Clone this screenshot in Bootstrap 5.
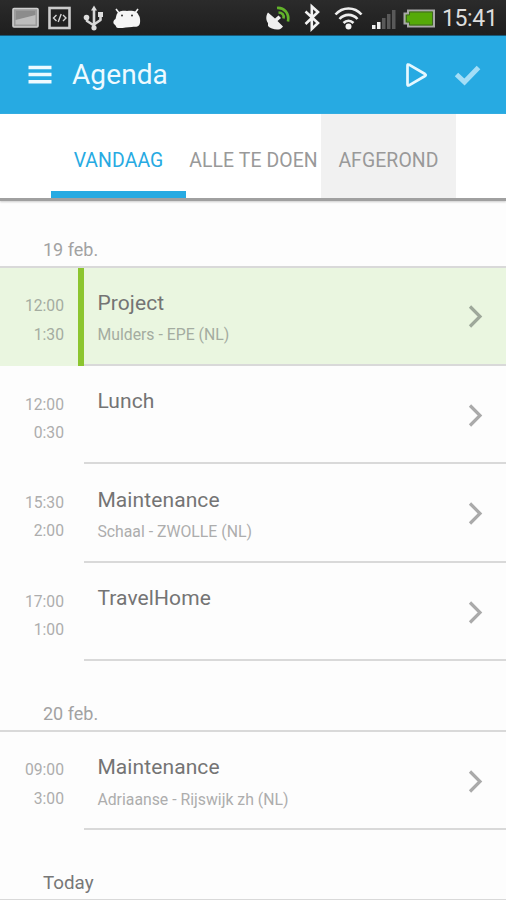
<!DOCTYPE html>
<html lang="nl">
<head>
<meta charset="utf-8">
<meta name="viewport" content="width=device-width, initial-scale=1">
<title>Agenda</title>
<link href="https://cdn.jsdelivr.net/npm/bootstrap@5.3.0/dist/css/bootstrap.min.css" rel="stylesheet">
<style>
body{font-family:Roboto,"Liberation Sans",sans-serif;height:900px;overflow:hidden;background:#fdfdfd;color:#777}
svg{display:block;flex:none}
.statusbar{height:36px;background:linear-gradient(#2b2b2b,#1e1e1e);border-bottom:1px solid #16597a;padding:0 8.500px 0 12px}
.clock{font-size:23px;line-height:36px;color:#ddd;letter-spacing:-.35px;padding-top:2px;margin-left:3.500px}
.appbar{height:78px;background:#27aae2;padding:0 25px 0 28px}
.appbar h1{font-size:28px;line-height:36px;color:#eefaff;font-weight:400;margin-left:20px;letter-spacing:.1px}
.done{margin-left:26px}
.tabs{height:87px;background:#fff;border-bottom:3px solid #a0a0a0;box-shadow:0 1px 2px #ccc;padding-left:51px}
.tabs .nav-link{width:135px;padding:0;border-radius:0;font-size:19.4px;line-height:93px;height:84px;color:#999;text-align:center;white-space:nowrap;letter-spacing:.1px}
.tabs .nav-link.active{color:#27aae2;box-shadow:inset 0 -7px #27aae2}
.tabs .nav-link.pressed{background:#f1f1f1}
.day{height:70.5px;border-bottom:2px solid #d9d9d9;padding:0 0 2.500px 43px;font-size:18px;line-height:26px;color:#a2a2a2}
.day.first{height:66.7px}
.day.today{color:#777;font-size:18.800px}
.event{height:98.4px}
.times{width:78px;padding:24.700px 14px 0 0;font-size:15.7px;line-height:28.2px;color:#adadad}
.stripe{width:5.5px}
.info{border-bottom:2px solid #d9d9d9;padding:20.3px 23px 0 13.900px}
.title{font-size:21px;line-height:31.5px;letter-spacing:.1px;color:#747474}
.place{font-size:15.8px;line-height:31px;color:#adadad}
.current{background:#eaf6e0}
.current .stripe{background:#8cc52f}
.current .times,.current .place{color:#a4aca0}
.chev{margin-top:15.5px}
</style>
</head>
<body>
<div class="statusbar d-flex align-items-center justify-content-between">
  <div class="d-flex align-items-center">
    <svg width="130" height="35" viewBox="12 0 130 35">
      <rect x="13" y="8.5" width="25" height="18.5" rx="1" fill="#9b9b9b" stroke="#d0d0d0" stroke-width="1.6"/>
      <rect x="15.5" y="11" width="20" height="13.5" fill="#bdbdbd"/><path d="M15.500 11h20v4l-20 5z" fill="#8c8c8c"/>
      <rect x="49.500" y="8" width="20" height="20" fill="#222" stroke="#ccc" stroke-width="2.600"/>
      <path d="M56.500 15l-3 3 3 3M63 15l3 3-3 3M61.200 14l-3 8" fill="none" stroke="#d5d5d5" stroke-width="1.400"/>
      <g fill="none" stroke="#d8d8d8" stroke-width="2.600" stroke-linejoin="round"><path d="M94 28V9M94 25.500l-7-4.500v-4M94 24.500l6.500-4.500V14"/></g>
      <g fill="#ddd"><path d="M91 10.500l3-5 3 5z"/><circle cx="86.500" cy="17.500" r="2.800"/><rect x="98" y="12" width="5" height="5"/><circle cx="94" cy="27.800" r="2.600"/></g>
      <path d="M119 13L116 9M135 13L138 9" stroke="#f3f3f3" stroke-width="1.600"/>
      <path d="M116.500 15C118 11 122 10.500 127 11C133 10.500 137 11 138.500 15C140.500 17 140.500 23 139.500 24.500C138 27.500 135 26.500 132 27C127 27 122 28.500 118 28C115.500 27.500 116.500 25.500 114.500 24.500C112.500 23 113.500 20 115.500 19Z" fill="#f5f5f5"/>
      <circle cx="122" cy="15.500" r="1" fill="#333"/><circle cx="132" cy="15.500" r="1" fill="#333"/>
    </svg>
  </div>
  <div class="d-flex align-items-center">
    <svg width="176" height="35" viewBox="262 0 176 35">
      <path d="M268 12.500c-2.500 3.500-2 8 0 10.500v3c2 2.500 7 4 10.500 3.500 1.800-.2 3.500-1.500 4.500-3l-5.500-5.500 3.500-3-2.500-2.500-3.500 3z" fill="#eee"/>
      <path d="M278.500 12.500c3.500 0 6 2.500 5 6M277 8c7-.5 12.500 5 11 13.500" fill="none" stroke="#62b32a" stroke-width="2.700"/>
      <path d="M305.500 11.500L318 23l-6.200 6V6.500L318 12l-12.500 12" fill="none" stroke="#f2f2f2" stroke-width="2.600"/>
      <g fill="none" stroke="#eee" stroke-width="2.600"><path d="M335.500 14.500c7-8 19-8 26 0M339.500 19c5-5.500 13-5.500 18 0M343.500 23c3-3 7-3 10 0"/></g><circle cx="348.500" cy="26.500" r="3" fill="#f5f5f5"/>
      <path d="M372 25h3.500v4H372zM377 22h3.500v7H377z" fill="#eee"/><path d="M382 18h3.500v11H382zM387 14h3.500v15H387zM392 10h3.500v19H392z" fill="#595959"/>
      <path d="M408 10.500h26v16h-26v-3h-3.500v-10h3.500z" fill="#55aa08" stroke="#a8a8a8" stroke-width="2"/><path d="M409.500 12h23v13h-23v-3h-3v-7h3z" fill="none" stroke="#3a5526" stroke-width=".8"/>
    </svg>
    <span class="clock">15:41</span>
  </div>
</div>
<nav class="appbar d-flex align-items-center">
  <svg width="24" height="20" viewBox="0 0 24 20"><path d="M.5 2.500h23M.5 9.500h23M.5 16.700h23" stroke="#eefaff" stroke-width="3.600"/></svg>
  <h1 class="mb-0">Agenda</h1>
  <svg class="ms-auto" width="23" height="26" viewBox="0 0 23 26"><path d="M2.500 3.500Q2.500 2 4 2.700L20 12q1.500 1 0 2L4 23.300Q2.500 24 2.500 22.500z" fill="none" stroke="#e6f8ff" stroke-width="2.700" stroke-linejoin="round"/></svg>
  <svg class="done" width="27" height="22" viewBox="0 0 27 22"><path d="M2.500 10.500l8 7.500L24.500 3.500" fill="none" stroke="#a4def7" stroke-width="5"/></svg>
</nav>
<nav class="tabs nav flex-nowrap">
  <a class="nav-link active">VANDAAG</a>
  <a class="nav-link">ALLE TE DOEN</a>
  <a class="nav-link pressed">AFGEROND</a>
</nav>
<main>
  <div class="day first d-flex align-items-end">19 feb.</div>
  <div class="event current d-flex">
    <div class="times text-end">12:00<br>1:30</div><div class="stripe"></div>
    <div class="info flex-fill d-flex justify-content-between"><div><div class="title">Project</div><div class="place">Mulders - EPE (NL)</div></div>
    <svg class="chev" width="16" height="27" viewBox="0 0 16 27"><path d="M3 3.500l10 10-10 10" fill="none" stroke="#9ea89a" stroke-width="3.200"/></svg></div>
  </div>
  <div class="event d-flex">
    <div class="times text-end">12:00<br>0:30</div><div class="stripe"></div>
    <div class="info flex-fill d-flex justify-content-between"><div class="title">Lunch</div>
    <svg class="chev" width="16" height="27" viewBox="0 0 16 27"><path d="M3 3.500l10 10-10 10" fill="none" stroke="#aaa" stroke-width="3.200"/></svg></div>
  </div>
  <div class="event d-flex">
    <div class="times text-end">15:30<br>2:00</div><div class="stripe"></div>
    <div class="info flex-fill d-flex justify-content-between"><div><div class="title">Maintenance</div><div class="place">Schaal - ZWOLLE (NL)</div></div>
    <svg class="chev" width="16" height="27" viewBox="0 0 16 27"><path d="M3 3.500l10 10-10 10" fill="none" stroke="#aaa" stroke-width="3.200"/></svg></div>
  </div>
  <div class="event d-flex">
    <div class="times text-end">17:00<br>1:00</div><div class="stripe"></div>
    <div class="info flex-fill d-flex justify-content-between"><div class="title">TravelHome</div>
    <svg class="chev" width="16" height="27" viewBox="0 0 16 27"><path d="M3 3.500l10 10-10 10" fill="none" stroke="#aaa" stroke-width="3.200"/></svg></div>
  </div>
  <div class="day d-flex align-items-end">20 feb.</div>
  <div class="event d-flex">
    <div class="times text-end">09:00<br>3:00</div><div class="stripe"></div>
    <div class="info flex-fill d-flex justify-content-between"><div><div class="title">Maintenance</div><div class="place">Adriaanse - Rijswijk zh (NL)</div></div>
    <svg class="chev" width="16" height="27" viewBox="0 0 16 27"><path d="M3 3.500l10 10-10 10" fill="none" stroke="#aaa" stroke-width="3.200"/></svg></div>
  </div>
  <div class="day today d-flex align-items-end">Today</div>
</main>
<script src="https://cdn.jsdelivr.net/npm/bootstrap@5.3.0/dist/js/bootstrap.bundle.min.js"></script>
</body>
</html>
